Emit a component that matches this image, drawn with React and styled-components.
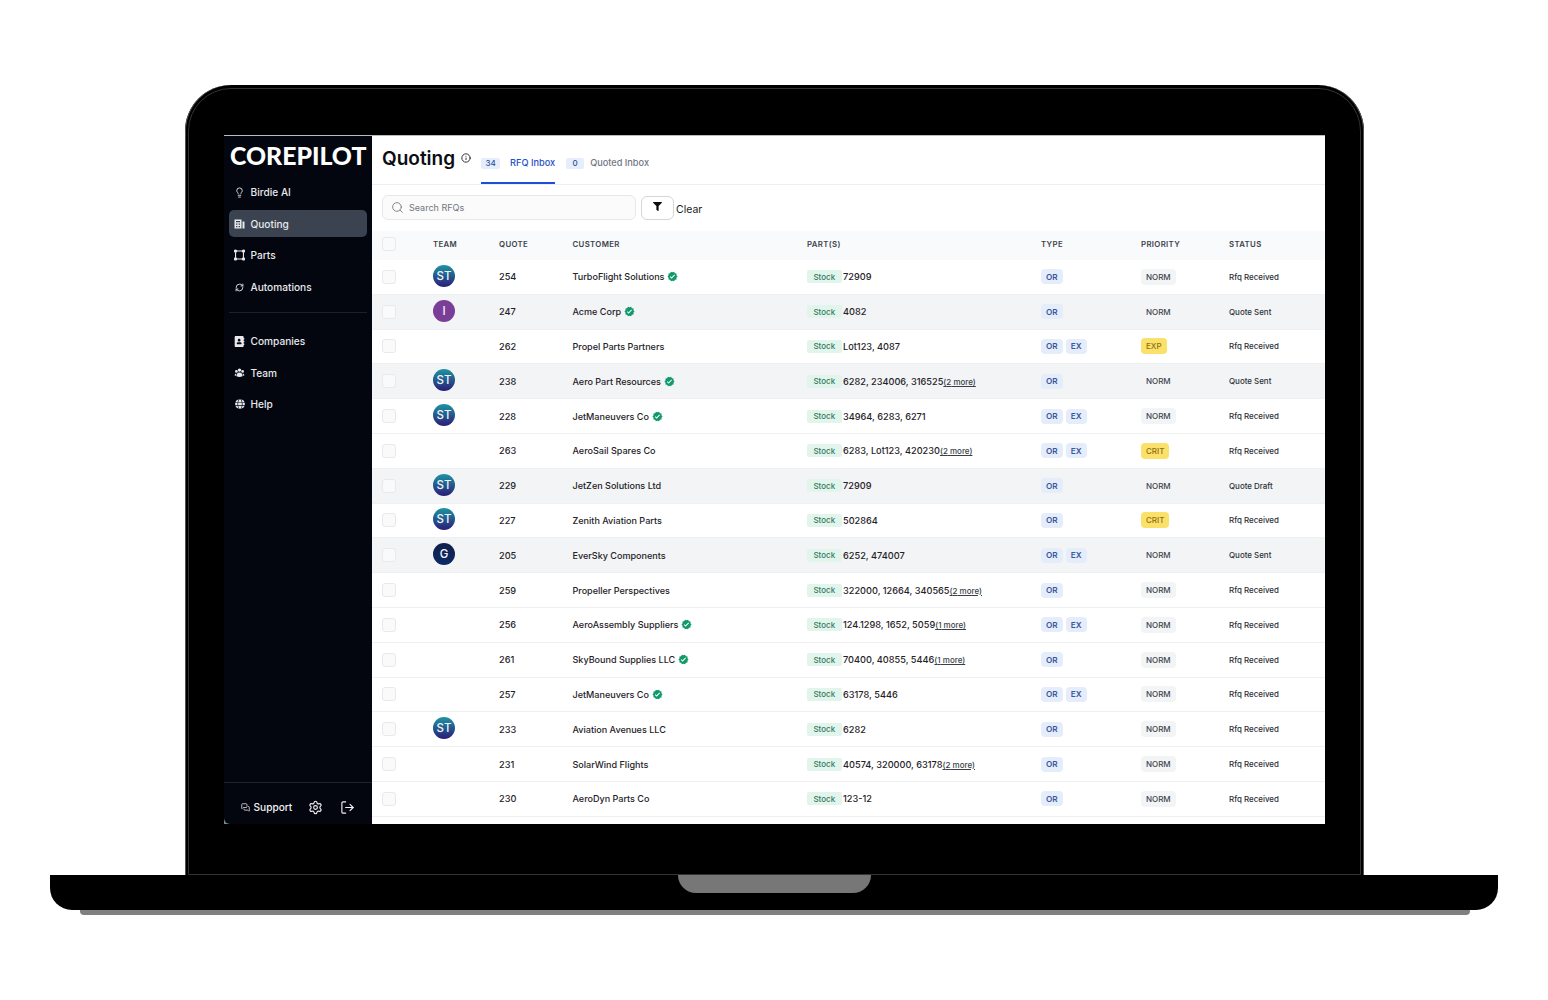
import React from "react"
import styled, { createGlobalStyle } from "styled-components"
import { Lightbulb, RefreshCw, MessagesSquare, Settings, LogOut, Search, Info } from "lucide-react"
import { FaAddressBook, FaFilter, FaGlobe } from "react-icons/fa"
import { HiUserGroup } from "react-icons/hi2"
import { MdVerified } from "react-icons/md"

const GlobalStyle = createGlobalStyle`
  html, body { margin: 0; padding: 0; background: #fff; }
  body { font-family: Inter, "Liberation Sans", sans-serif; }
  * { box-sizing: border-box; }
`

const Page = styled.div`
  width: 1548px;
  height: 1000px;
  padding-top: 85px;
  overflow: hidden;
  background: #fff;
`

const Lid = styled.div`
  width: 1179px;
  height: 790px;
  margin-left: 185px;
  padding: 3px 3px 0;
  background: #000;
  border-radius: 46px 46px 0 0;
  box-shadow: inset 1px 0 0 #555, inset -1px 0 0 #555;
`

const Bezel = styled.div`
  height: 787px;
  padding: 46px 35px 0;
  border: 1px solid #333;
  border-radius: 43px 43px 0 0;
`

const Screen = styled.div`
  display: flex;
  height: 689px;
  background: #6f8f8a;
  border-top: 1px solid #b9bcc0;
`

const Base = styled.div`
  display: flex;
  justify-content: center;
  width: 1448px;
  height: 35px;
  margin-left: 50px;
  background: #000;
  border-radius: 0 0 22px 22px;
`

const Notch = styled.div`
  width: 193px;
  height: 18px;
  background: #777;
  border-radius: 0 0 18px 18px;
`

const BaseShadow = styled.div`
  width: 1390px;
  height: 5px;
  margin-left: 80px;
  background: #808080;
  border-radius: 0 0 4px 4px;
`

const Sidebar = styled.aside`
  display: flex;
  flex-direction: column;
  width: 148px;
  flex-shrink: 0;
  padding: 0 5px;
  background: #03060f;
  border-bottom-left-radius: 6px;
`

const Logo = styled.div`
  height: 42px;
  padding: 5px 0 0 1px;
  color: #fff;
  font-family: Lato, sans-serif;
  font-size: 24.8px;
  font-weight: 900;
  line-height: 30px;
  white-space: nowrap;
`

const NavGroup = styled.nav`
  display: flex;
  flex-direction: column;
  gap: 4.7px;
`

const NavItem = styled.div`
  display: flex;
  align-items: center;
  gap: 5.5px;
  height: 27px;
  padding: 1px 0 0 5px;
  border-radius: 5px;
  background: ${p => (p.$active ? "#3b4350" : "transparent")};
  color: #e7e9ed;
  font-size: 10.15px;
  font-weight: 500;
`

const NavIcon = styled.span`
  display: flex;
  justify-content: center;
  width: 11px;
`

const Divider = styled.div`
  height: 1px;
  margin: 12px 0 14px;
  background: #1c2129;
`

const SidebarFooter = styled.div`
  display: flex;
  align-items: center;
  height: 42px;
  margin: auto -5px 0;
  padding: 7px 0 0 17px;
  border-top: 1px solid #1f242c;
  color: #f1f2f4;
  font-size: 10.15px;
  font-weight: 500;
`

const SupportLink = styled.span`
  display: flex;
  align-items: center;
  gap: 3.5px;
  width: 68px;
`

const FooterIcon = styled.span`
  display: flex;
  width: 32px;
`

const Main = styled.main`
  flex: 1;
  min-width: 0;
  background: #fff;
  overflow: hidden;
`

const Header = styled.header`
  display: flex;
  height: 49px;
  padding-left: 10px;
  border-bottom: 1px solid #eceef0;
`

const Title = styled.h1`
  margin: 10px 0 0;
  color: #0b0d11;
  font-size: 19px;
  font-weight: 600;
  line-height: 26px;
`

const TitleInfo = styled.span`
  display: flex;
  width: 26px;
  padding: 17px 0 0 6px;
  color: #111;
`

const Tab = styled.div`
  display: flex;
  align-items: center;
  gap: ${p => (p.$active ? "10px" : "6px")};
  height: 48px;
  margin-right: 11px;
  padding-top: 6px;
  border-bottom: 2px solid ${p => (p.$active ? "#1d4ed8" : "transparent")};
  color: ${p => (p.$active ? "#1e4fc4" : "#71767f")};
  font-size: 9.2px;
  font-weight: 500;
`

const TabCount = styled.span`
  display: flex;
  align-items: center;
  justify-content: center;
  width: ${p => (p.$wide ? "19px" : "18px")};
  height: 11px;
  margin-top: 2px;
  border-radius: 2px;
  background: #e6eefb;
  color: #2d4f9e;
  font-size: 8px;
`

const Toolbar = styled.div`
  display: flex;
  align-items: center;
  height: 25px;
  margin: 10px 0 11px 10px;
`

const SearchBox = styled.div`
  display: flex;
  align-items: center;
  gap: 5px;
  width: 254px;
  height: 25px;
  padding-left: 8px;
  background: #fbfbfb;
  border: 1px solid #e7e8ea;
  border-radius: 6px;
  color: #71767f;
  font-size: 9px;
`

const FilterButton = styled.button`
  display: flex;
  align-items: center;
  justify-content: center;
  width: 33px;
  height: 24px;
  margin-left: 5px;
  padding: 0 0 2px;
  background: #fff;
  border: 1px solid #d4d6da;
  border-radius: 6px;
  color: #0b0d11;
`

const ClearLabel = styled.span`
  padding: 3px 0 0 2px;
  color: #1b1e24;
  font-size: 10.5px;
`

const Row = styled.div`
  display: grid;
  grid-template-columns: 51px 66px 73.5px 234.5px 234px 100px 88px 1fr;
  align-items: center;
  height: 34.8px;
  padding-left: 10px;
  background: ${p => (p.$shaded ? "#f3f4f5" : "#fff")};
  border-bottom: 1px solid #eef0f2;
  color: #1f2329;
  font-size: 9.2px;
  font-weight: 500;
`

const HeadRow = styled(Row)`
  height: 29px;
  padding-bottom: 3px;
  background: #f8fafb;
  border-bottom: none;
  color: #3d424b;
  font-size: 7.8px;
  font-weight: 600;
  letter-spacing: 0.35px;
  text-transform: uppercase;
`

const Checkbox = styled.span`
  display: block;
  width: 14px;
  height: 14px;
  background: #fafafa;
  border: 1px solid #e8e9eb;
  border-radius: 3px;
`

const Avatar = styled.span`
  display: flex;
  align-items: center;
  justify-content: center;
  width: 22px;
  height: 22px;
  margin-top: -2px;
  border-radius: 50%;
  background: ${p =>
    p.$kind === "I"
      ? "#7a3e98"
      : p.$kind === "G"
        ? "linear-gradient(#10204a, #0b2a66)"
        : "linear-gradient(#1d95a3, #2b1c78)"};
  color: #f1f5f9;
  font-size: 11.5px;
  font-weight: 500;
`

const CustomerCell = styled.span`
  display: flex;
  align-items: center;
  gap: 3px;
  font-size: 9.05px;
  white-space: nowrap;
`

const PartsCell = styled.span`
  display: flex;
  align-items: center;
  gap: 1.5px;
  white-space: nowrap;
`

const StockChip = styled.span`
  display: flex;
  align-items: center;
  justify-content: center;
  width: 34.5px;
  height: 13px;
  border-radius: 2px;
  background: #e2f5ed;
  color: #357a60;
  font-size: 8px;
`

const MoreLink = styled.span`
  color: #3a3f47;
  font-size: 8px;
  text-decoration: underline;
`

const TypeCell = styled.span`
  display: flex;
  gap: 3px;
`

const TypeChip = styled.span`
  display: flex;
  align-items: center;
  justify-content: center;
  width: 21.5px;
  height: 15px;
  border-radius: 4px;
  background: #e5edfa;
  color: #38579f;
  font-size: 8.2px;
  font-weight: 600;
`

const PriorityChip = styled.span`
  display: inline-flex;
  align-items: center;
  justify-self: start;
  height: 16px;
  padding: 0 5px;
  border-radius: 4px;
  background: ${p => (p.$level === "NORM" ? "#f3f4f5" : "#fbe06a")};
  color: ${p => (p.$level === "NORM" ? "#40454e" : "#8c6f14")};
  font-size: 8px;
  font-weight: 500;
`

const Status = styled.span`
  color: #2c3038;
  font-size: 7.95px;
  white-space: nowrap;
`

// parts icon: four little nodes joined by lines
const PartsIcon = () => (
  <svg width="12" height="12" viewBox="0 0 12 12" fill="none" stroke="currentColor" strokeWidth="1.2">
    <path d="M3 1.7h6M3 10.3h6M1.7 3v6M10.3 3v6" />
    <circle cx="1.7" cy="1.7" r="1.2" fill="currentColor" />
    <circle cx="10.3" cy="1.7" r="1.2" fill="currentColor" />
    <circle cx="1.7" cy="10.3" r="1.2" fill="currentColor" />
    <circle cx="10.3" cy="10.3" r="1.2" fill="currentColor" />
  </svg>
)

const QuotingIcon = () => (
  <svg width="11" height="11" viewBox="0 0 11 11">
    <path fill="currentColor" fillRule="evenodd" d="M0.5 1.5h7v9h-7zM2 3v1.3h4V3zM2 5.6v1.2h1.4V5.6zM4.6 5.6v1.2H6V5.6zM2 8v1.2h1.4V8zM4.6 8v1.2H6V8z" />
    <path fill="currentColor" d="M8.5 3.5h2v7h-2z" />
  </svg>
)

const rows = [
  { id: 254, team: "ST", customer: "TurboFlight Solutions", verified: true, parts: "72909", ex: false, priority: "NORM", status: "Rfq Received" },
  { id: 247, team: "I", customer: "Acme Corp", verified: true, parts: "4082", ex: false, priority: "NORM", status: "Quote Sent", shaded: true },
  { id: 262, customer: "Propel Parts Partners", parts: "Lot123, 4087", ex: true, priority: "EXP", status: "Rfq Received" },
  { id: 238, team: "ST", customer: "Aero Part Resources", verified: true, parts: "6282, 234006, 316525", more: 2, priority: "NORM", status: "Quote Sent", shaded: true },
  { id: 228, team: "ST", customer: "JetManeuvers Co", verified: true, parts: "34964, 6283, 6271", ex: true, priority: "NORM", status: "Rfq Received" },
  { id: 263, customer: "AeroSail Spares Co", parts: "6283, Lot123, 420230", more: 2, ex: true, priority: "CRIT", status: "Rfq Received" },
  { id: 229, team: "ST", customer: "JetZen Solutions Ltd", parts: "72909", priority: "NORM", status: "Quote Draft", shaded: true },
  { id: 227, team: "ST", customer: "Zenith Aviation Parts", parts: "502864", priority: "CRIT", status: "Rfq Received" },
  { id: 205, team: "G", customer: "EverSky Components", parts: "6252, 474007", ex: true, priority: "NORM", status: "Quote Sent", shaded: true },
  { id: 259, customer: "Propeller Perspectives", parts: "322000, 12664, 340565", more: 2, priority: "NORM", status: "Rfq Received" },
  { id: 256, customer: "AeroAssembly Suppliers", verified: true, parts: "124.1298, 1652, 5059", more: 1, ex: true, priority: "NORM", status: "Rfq Received" },
  { id: 261, customer: "SkyBound Supplies LLC", verified: true, parts: "70400, 40855, 5446", more: 1, priority: "NORM", status: "Rfq Received" },
  { id: 257, customer: "JetManeuvers Co", verified: true, parts: "63178, 5446", ex: true, priority: "NORM", status: "Rfq Received" },
  { id: 233, team: "ST", customer: "Aviation Avenues LLC", parts: "6282", priority: "NORM", status: "Rfq Received" },
  { id: 231, customer: "SolarWind Flights", parts: "40574, 320000, 63178", more: 2, priority: "NORM", status: "Rfq Received" },
  { id: 230, customer: "AeroDyn Parts Co", parts: "123-12", priority: "NORM", status: "Rfq Received" },
]

const topNav = [
  { label: "Birdie AI", icon: <Lightbulb size={11} strokeWidth={2} /> },
  { label: "Quoting", icon: <QuotingIcon />, active: true },
  { label: "Parts", icon: <PartsIcon /> },
  { label: "Automations", icon: <RefreshCw size={9} strokeWidth={2.4} /> },
]

const bottomNav = [
  { label: "Companies", icon: <FaAddressBook size={11} /> },
  { label: "Team", icon: <HiUserGroup size={13} /> },
  { label: "Help", icon: <FaGlobe size={10} /> },
]

const renderNav = items => (
  <NavGroup>
    {items.map(item => (
      <NavItem key={item.label} $active={item.active}>
        <NavIcon>{item.icon}</NavIcon>
        {item.label}
      </NavItem>
    ))}
  </NavGroup>
)

const App = () => (
  <Page>
    <GlobalStyle />
    <Lid>
      <Bezel>
        <Screen>
          <Sidebar>
            <Logo>COREPILOT</Logo>
            {renderNav(topNav)}
            <Divider />
            {renderNav(bottomNav)}
            <SidebarFooter>
              <SupportLink>
                <MessagesSquare size={9} strokeWidth={2} />
                Support
              </SupportLink>
              <FooterIcon><Settings size={15} strokeWidth={1.8} /></FooterIcon>
              <FooterIcon><LogOut size={15} strokeWidth={1.8} /></FooterIcon>
            </SidebarFooter>
          </Sidebar>
          <Main>
            <Header>
              <Title>Quoting</Title>
              <TitleInfo><Info size={10} strokeWidth={2} /></TitleInfo>
              <Tab $active>
                <TabCount $wide>34</TabCount>
                RFQ Inbox
              </Tab>
              <Tab>
                <TabCount>0</TabCount>
                Quoted Inbox
              </Tab>
            </Header>
            <Toolbar>
              <SearchBox>
                <Search size={13} strokeWidth={1.6} />
                Search RFQs
              </SearchBox>
              <FilterButton><FaFilter size={9} /></FilterButton>
              <ClearLabel>Clear</ClearLabel>
            </Toolbar>
            <HeadRow>
              <Checkbox />
              <span>Team</span>
              <span>Quote</span>
              <span>Customer</span>
              <span>Part(s)</span>
              <span>Type</span>
              <span>Priority</span>
              <span>Status</span>
            </HeadRow>
            {rows.map(row => (
              <Row key={row.id} $shaded={row.shaded}>
                <Checkbox />
                <span>{row.team && <Avatar $kind={row.team}>{row.team}</Avatar>}</span>
                <span>{row.id}</span>
                <CustomerCell>
                  {row.customer}
                  {row.verified && <MdVerified size={11} color="#119a69" />}
                </CustomerCell>
                <PartsCell>
                  <StockChip>Stock</StockChip>
                  <span>
                    {row.parts}
                    {row.more && <MoreLink>({row.more} more)</MoreLink>}
                  </span>
                </PartsCell>
                <TypeCell>
                  <TypeChip>OR</TypeChip>
                  {row.ex && <TypeChip>EX</TypeChip>}
                </TypeCell>
                <PriorityChip $level={row.priority}>{row.priority}</PriorityChip>
                <Status>{row.status}</Status>
              </Row>
            ))}
          </Main>
        </Screen>
      </Bezel>
    </Lid>
    <Base><Notch /></Base>
    <BaseShadow />
  </Page>
)

export default App
